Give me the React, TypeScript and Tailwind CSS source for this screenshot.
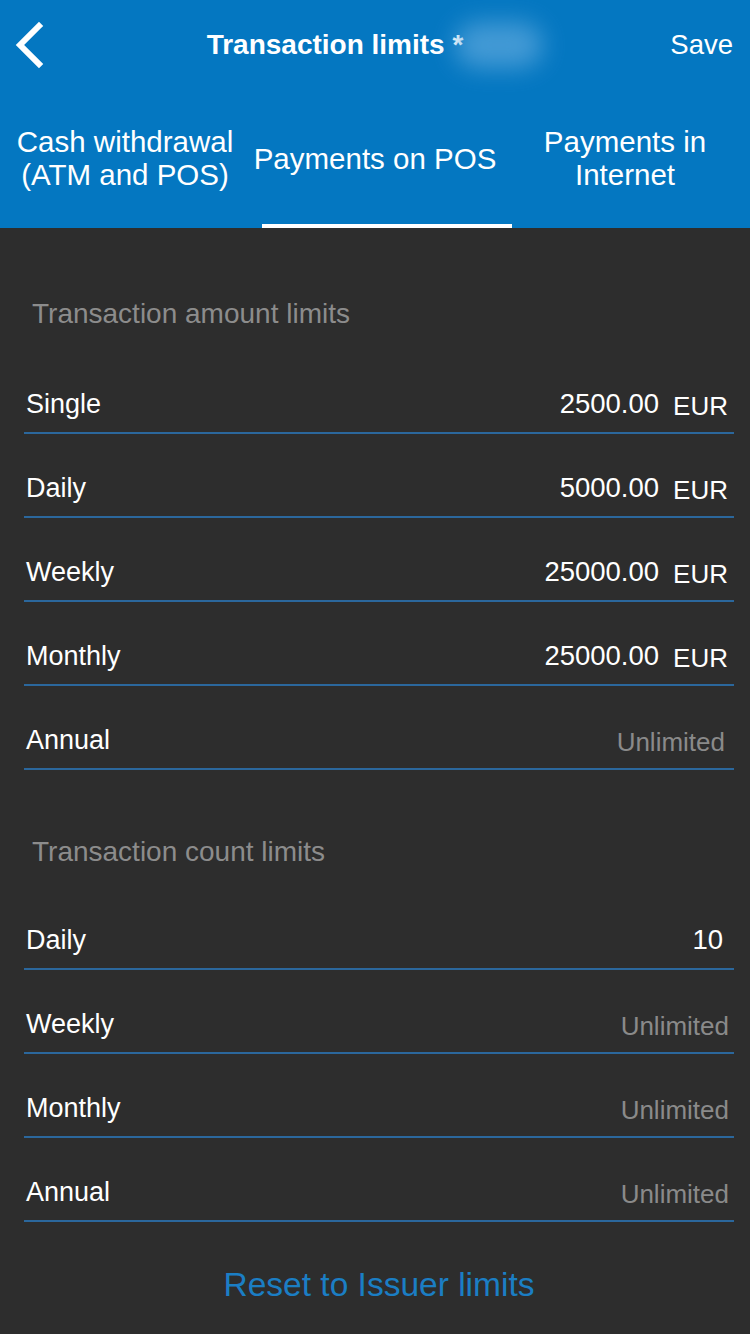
import React from "react";

type Row = { label: string; value?: string; currency?: boolean };

const AMOUNT_LIMITS: Row[] = [
  { label: "Single", value: "2500.00", currency: true },
  { label: "Daily", value: "5000.00", currency: true },
  { label: "Weekly", value: "25000.00", currency: true },
  { label: "Monthly", value: "25000.00", currency: true },
  { label: "Annual" },
];

const COUNT_LIMITS: Row[] = [
  { label: "Daily", value: "10" },
  { label: "Weekly" },
  { label: "Monthly" },
  { label: "Annual" },
];

function LimitRow({ row, unlimitedPad }: { row: Row; unlimitedPad: string }) {
  return (
    <div className="h-[84px] flex items-end justify-between pb-[10px] border-b-2 border-[#2b679c]">
      <span className="pl-[2px] text-[27px] leading-[36px] text-white">{row.label}</span>
      {row.value ? (
        <span className={`flex items-center gap-[14px] text-white ${row.currency ? "pr-[6px]" : "pr-[11px]"}`}>
          <span className="text-[27.5px] leading-[36px]">{row.value}</span>
          {row.currency && <span className="text-[26px] leading-[36px] translate-y-[2px]">EUR</span>}
        </span>
      ) : (
        <span className={`text-[26px] leading-[36px] text-[#8a8a8a] translate-y-[2px] ${unlimitedPad}`}>
          Unlimited
        </span>
      )}
    </div>
  );
}

export default function App() {
  return (
    <main
      className="w-[750px] min-h-[1334px] bg-[#2d2d2d]"
      style={{ fontFamily: '"Liberation Sans", Arial, sans-serif' }}
    >
      {/* Header */}
      <div className="bg-[#0477c1] text-white">
        <div className="h-[90px] grid grid-cols-[110px_1fr_110px] items-center">
          <div className="pl-[14px]">
            <svg width="32" height="48" viewBox="0 0 32 48" fill="none">
              <path d="M25 5 L6 24 L25 43" stroke="white" strokeWidth="6" strokeLinecap="square" />
            </svg>
          </div>
          <div className="flex items-center justify-center">
            <span className="text-[28px] leading-[36px] font-bold whitespace-nowrap">Transaction limits *</span>
            <span className="inline-block w-[88px] h-[46px] -ml-[8px] rounded-full bg-[#5ea9de] blur-md opacity-70" />
          </div>
          <div className="text-right pr-[17px] text-[27.5px] leading-[36px]">Save</div>
        </div>

        <div className="h-[138px] grid grid-cols-3">
          <div className="flex items-center justify-center pb-[2px] text-center text-[29.5px] leading-[33px]">
            Cash withdrawal
            <br />
            (ATM and POS)
          </div>
          <div className="relative flex items-center justify-center pb-[2px] text-center text-[29.5px] leading-[33px]">
            Payments on POS
            <div className="absolute bottom-0 left-[12px] right-[-12px] h-[4px] bg-white" />
          </div>
          <div className="flex items-center justify-center pb-[2px] text-center text-[29.5px] leading-[33px]">
            Payments in
            <br />
            Internet
          </div>
        </div>
      </div>

      {/* Amount limits */}
      <div className="pl-[24px] pr-[16px]">
        <div className="h-[122px] pt-[68px] pl-[8px] text-[28px] leading-[36px] text-[#8c8c8c]">
          Transaction amount limits
        </div>
        {AMOUNT_LIMITS.map((row) => (
          <LimitRow key={row.label} row={row} unlimitedPad="pr-[9px]" />
        ))}

        {/* Count limits */}
        <div className="h-[116px] pt-[64px] pl-[8px] text-[28px] leading-[36px] text-[#8c8c8c]">
          Transaction count limits
        </div>
        {COUNT_LIMITS.map((row) => (
          <LimitRow key={row.label} row={row} unlimitedPad="pr-[5px]" />
        ))}

        <div className="pt-[43px] pb-[20px] text-center text-[33.5px] leading-[40px] text-[#1b7ec4]">
          Reset to Issuer limits
        </div>
      </div>
    </main>
  );
}
